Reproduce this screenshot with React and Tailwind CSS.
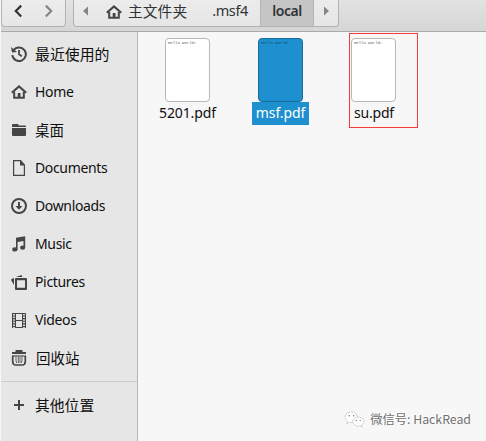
import React from "react";

const icons = {
  recent: (
    <g fill="none" stroke="currentColor" strokeWidth="2">
      <path d="M2.6 4.2A6.8 6.8 0 1 1 1.3 9.2" />
      <path d="M8 4v4.3l2.8 2" strokeWidth="1.8" />
      <path d="M0 1l1 5.6 5-.6z" fill="currentColor" stroke="none" />
    </g>
  ),
  home: (
    <g>
      <path d="M.8 8.8 8 2.4l7.2 6.4" fill="none" stroke="currentColor" strokeWidth="2.1" />
      <path d="M3.2 8v5.8h9.6V8" fill="none" stroke="currentColor" strokeWidth="2" />
      <path d="M6.7 9h2.8v5H6.7z" fill="currentColor" />
    </g>
  ),
  folder: (
    <g fill="currentColor">
      <path d="M1 5V3q0-1 1-1h5l1 1.5h6q1 0 1 1V5z" />
      <path d="M1 6h14v7q0 1-1 1H2q-1 0-1-1z" />
    </g>
  ),
  document: (
    <g>
      <path d="M2.6.6h7L13.4 5v10.4H2.6z" fill="none" stroke="currentColor" strokeWidth="1.2" />
      <path d="M9 0l5 5.5H9z" fill="currentColor" />
    </g>
  ),
  download: (
    <g>
      <circle cx="8" cy="8" r="7" fill="none" stroke="currentColor" strokeWidth="2" />
      <path d="M7 4h2v4h2.5L8 11.8 4.5 8H7z" fill="currentColor" />
    </g>
  ),
  music: (
    <g fill="currentColor">
      <path d="M5 1.8 14.2.3v11.2h-1.7V5L6.600 6v7H5z" />
      <ellipse cx="3.9" cy="13.4" rx="2.7" ry="2.1" />
      <ellipse cx="11.6" cy="11.7" rx="2.6" ry="2.1" />
    </g>
  ),
  pictures: (
    <g fill="currentColor">
      <path d="M5 4h10q1 0 1 1v10q0 1-1 1H5q-1 0-1-1V5q0-1 1-1zm1 2.2v7.600h8V6.200z" fillRule="evenodd" />
      <path d="M5 3l5.500-2 1 2zM3 4v7L0 6l.6-1z" />
    </g>
  ),
  videos: (
    <g>
      <path fillRule="evenodd" fill="currentColor" d="M1 1h14v15H1zM5 2v6h6V2zM5 9v6h6V9z" />
      <path d="M3 2v14M13 2v14" stroke="#e6e6e6" strokeWidth="1.8" strokeDasharray="1.5 1.1" />
    </g>
  ),
  trash: (
    <g fill="none" stroke="currentColor">
      <path d="M4.500 1h7M1 3h14" strokeWidth="1.800" />
      <path d="M1.700 6v5.500q.2 3.500 3 3.500h6.600q2.800 0 3-3.500V6" strokeWidth="1.700" />
      <path d="M1 6h14" strokeWidth="1.200" />
      <path d="M5 7q-.5 3.500.8 6M11 7q.5 3.500-.8 6M7.300 7v6M9 7v6" strokeWidth=".8" />
    </g>
  ),
  plus: <path d="M8 3v10M3 8h10" stroke="currentColor" strokeWidth="2" />,
};

function Icon({ name, className = "" }) {
  return (
    <svg viewBox="0 0 16 16" className={`size-4 shrink-0 text-[#454545] ${className}`}>
      {icons[name]}
    </svg>
  );
}

const places = [
  { icon: "recent", label: "最近使用的", cls: "text-[14.9px]" },
  { icon: "home", label: "Home" },
  { icon: "folder", label: "桌面", cls: "pt-[2px] text-[14.5px]" },
  { icon: "document", label: "Documents" },
  { icon: "download", label: "Downloads" },
  { icon: "music", label: "Music" },
  { icon: "pictures", label: "Pictures" },
  { icon: "videos", label: "Videos" },
  { icon: "trash", label: "回收站", cls: "pl-px pt-[2px] text-[14.5px]" },
];

function Place({ icon, label, cls = "pb-[2px] text-[14px] tracking-[-0.35px]" }) {
  return (
    <div className="flex h-[38px] items-center gap-2 pl-[10px]">
      <Icon name={icon} />
      <span className={`whitespace-nowrap ${cls}`}>{label}</span>
    </div>
  );
}

function Thumb({ selected }) {
  return (
    <div
      className={`h-16 w-[45px] overflow-hidden rounded-[4px] border pl-[2px] pt-[2px] ${
        selected ? "border-[#176c99] bg-[#1e8fcf] text-[#134a6b]" : "border-[#b8b8b5] bg-white text-[#666]"
      }`}
    >
      <div className="whitespace-nowrap font-['Liberation_Mono',monospace] text-[4px] leading-[4px] tracking-[-0.05px]">
        Hello World!
      </div>
    </div>
  );
}

export default function App() {
  return (
    <div className="flex h-[441px] w-[486px] flex-col overflow-hidden bg-[#f7f7f7] pl-px font-['Noto_Sans','Noto_Sans_CJK_SC',sans-serif] text-[14px] text-[#101010]">
      <header className="flex h-8 shrink-0 items-start gap-[7px] border-b border-[#a9aba8] bg-linear-to-b from-[#e2e2e2] to-[#d6d6d6]">
        <div className="flex h-[27px] w-[65px] items-center rounded-b-[4px] border border-t-0 border-[#b2b2b2] bg-linear-to-b from-[#ececec] to-[#e6e6e6]">
          <svg viewBox="0 0 64 26" className="h-[26px] w-16" fill="none" strokeWidth="2.2">
            <path d="M19.5 5.500 14 11l5.500 5.500" stroke="#2e3436" />
            <path d="M44.500 5.500 50 11l-5.500 5.500" stroke="#858585" />
          </svg>
        </div>
        <div className="flex h-[27px] w-[266px] overflow-hidden rounded-b-[4px] border border-t-0 border-[#b2b2b2] bg-linear-to-b from-[#ececec] to-[#e6e6e6] text-[#303436]">
          <svg viewBox="0 0 23 26" className="h-[26px] w-[23px] shrink-0" fill="#858585">
            <path d="M14 6.500v9L9 11z" />
          </svg>
          <div className="flex h-[23px] w-[163px] items-center">
            <Icon name="home" className="ml-[9px] text-[#2e3436]" />
            <span className="ml-[6px] whitespace-nowrap text-[14.8px]">主文件夹</span>
            <span className="ml-[25px] pb-[2px] text-[14.5px] tracking-[-0.4px]">.msf4</span>
          </div>
          <div className="flex h-[26px] w-[54px] items-center justify-center border-x border-[#b5b5b5] bg-[#c5c5c5] pb-[5px] text-[14px] font-semibold tracking-[-0.5px]">
            local
          </div>
          <svg viewBox="0 0 24 26" className="h-[26px] w-6 shrink-0" fill="#858585">
            <path d="M10 6.500v9l5-4.500z" />
          </svg>
        </div>
      </header>

      <div className="flex min-h-0 flex-1">
        <aside className="w-[137px] shrink-0 border-r border-[#b5b5b5] bg-[#e6e6e6] pt-[3px]">
          {places.map((p) => (
            <Place key={p.label} {...p} />
          ))}
          <div className="mt-1 border-t border-[#cccccc] pt-1">
            <Place icon="plus" label="其他位置" cls="pt-px text-[14.8px]" />
          </div>
        </aside>

        <main className="flex min-w-0 flex-1 flex-col justify-between">
          <div className="flex pt-px">
            <div className="ml-[16px] mt-[5px] flex w-[67px] flex-col items-center">
              <Thumb />
              <div className="h-[23px] text-[14px] leading-[22px] tracking-[-0.1px]">5201.pdf</div>
            </div>
            <div className="ml-[31px] mt-[5px] flex w-[57px] flex-col items-center">
              <Thumb selected />
              <div className="flex h-[23px] w-[57px] justify-center bg-[#1e8fcf] text-[14px] leading-[22px] tracking-[-0.1px] text-white">
                msf.pdf
              </div>
            </div>
            <div className="ml-[40px] h-[95px] w-[69px] border border-[#f43c3c] pl-px pt-1">
              <Thumb />
              <div className="ml-[3px] h-[23px] text-[14px] leading-[22px] tracking-[-0.2px]">su.pdf</div>
            </div>
          </div>

          <div className="flex items-center self-end pb-[10px] pr-[15px]">
            <svg viewBox="0 0 22 18" className="h-[17px] w-[21px]" stroke="#b0b0b0" strokeWidth=".8" strokeDasharray="2 1">
              <path d="M3 14l1-3Q1 9 1 6.500C1 3 4 1 7.500 1S14 3 14 6.500 11 12 7.500 12L5 12z" fill="#fff" />
              <path d="M19 17l-.6-2Q21 13 21 11c0-3-3-4.500-6-4.500S9 8 9 11s3 5 6 5l2-.4z" fill="#fff" />
              <g fill="#777" stroke="none">
                <circle cx="5.500" cy="5" r=".8" />
                <circle cx="10" cy="5" r=".8" />
                <circle cx="13" cy="10" r=".7" />
                <circle cx="17" cy="10" r=".7" />
              </g>
            </svg>
            <span className="ml-[5px] whitespace-nowrap font-['Noto_Sans_CJK_SC',sans-serif] text-[12.3px] leading-6 text-[#707070] [text-shadow:-1px_-1px_0_#fff]">
              微信号: HackRead
            </span>
          </div>
        </main>
      </div>
    </div>
  );
}
